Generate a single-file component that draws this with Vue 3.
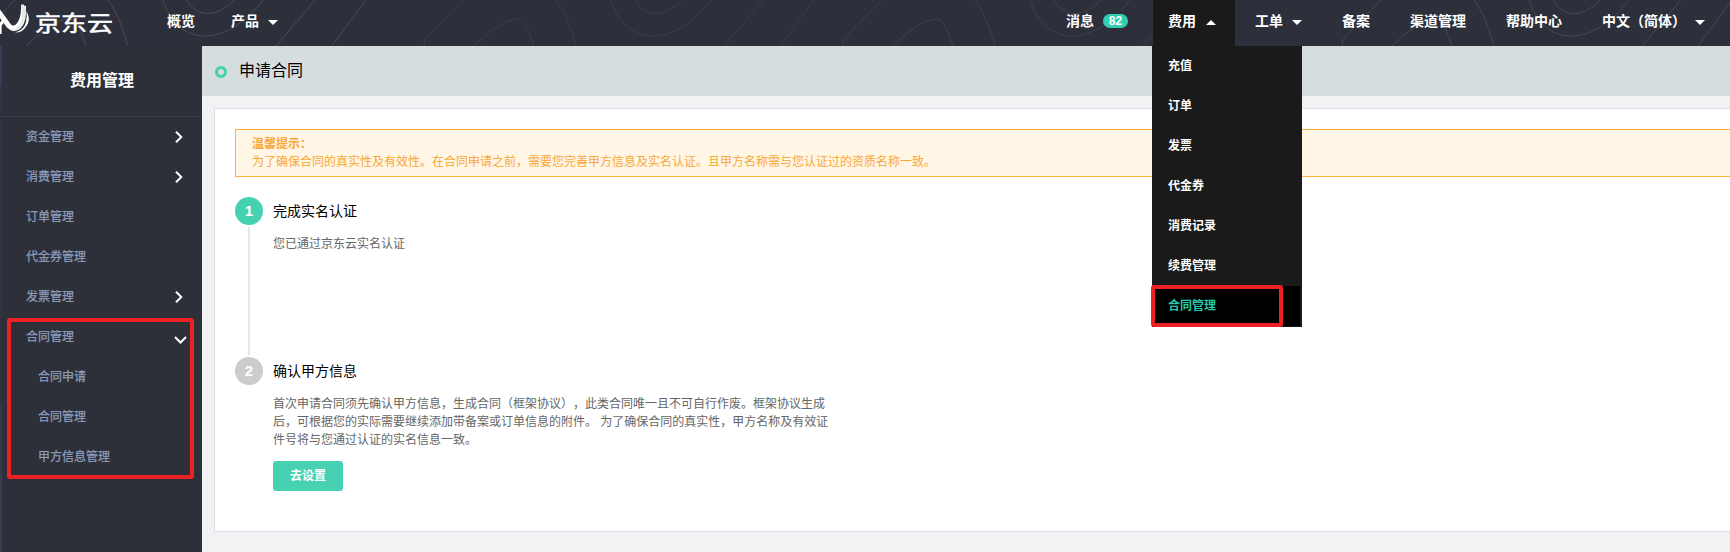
<script setup>
const tiles = [
  { x: 209, o: 0.13 },
  { x: 657, o: 0.07 },
  { x: 1076, o: 0.08 },
  { x: 1575, o: 0.11 },
]
const menu = [
  { label: '资金管理', arrow: 'right' },
  { label: '消费管理', arrow: 'right' },
  { label: '订单管理' },
  { label: '代金券管理' },
  { label: '发票管理', arrow: 'right' },
]
const subMenu = ['合同申请', '合同管理', '甲方信息管理']
const dropdown = ['充值', '订单', '发票', '代金券', '消费记录', '续费管理', '合同管理']
const agreement = [
  '首次申请合同须先确认甲方信息，生成合同（框架协议），此类合同唯一且不可自行作废。框架协议生成',
  '后，可根据您的实际需要继续添加带备案或订单信息的附件。 为了确保合同的真实性，甲方名称及有效证',
  '件号将与您通过认证的实名信息一致。',
]
</script>

<template>
  <div class="page">
    <header class="topbar">
      <svg class="pattern" width="1730" height="46" viewBox="0 0 1730 46">
        <g
          v-for="t in tiles"
          :key="t.x"
          :transform="`translate(${t.x} 0)`"
          fill="none"
          stroke="#fff"
          :stroke-opacity="t.o"
        >
          <path d="M-22 0C-12 18 8 18 25 0" />
          <path d="M-46 0C-32 46 16 50 54 0" />
          <path d="M106 0L67 46" />
          <path d="M157 0L123 46" />
          <path d="M-194 0L-230 37Q-233 40-233 46" />
          <path d="M-101 0Q-90 14-81 46" />
          <path d="M-183 46C-158 22-145 19-140 19C-134 19-130 25-123 46" />
        </g>
      </svg>
      <div class="logo">
        <svg class="mark" width="32" height="38" viewBox="0 0 32 38">
          <path d="M0 34V25L4 20" fill="none" stroke="#fff" stroke-width="3.2" />
          <path d="M-2 11L9 26C15 32 24 24 23.500 6" fill="none" stroke="#fff" stroke-width="5" />
          <path d="M21 5Q23 3 25 6Q28 20 21 28Q15 34 9 29Q20 31 22 16Z" fill="#e9eaec" />
          <path d="M26.500 11Q32 21 25 28Q21 33 15 32.500Q24 30 26 22Q27 17 26.500 11Z" fill="#fff" />
        </svg>
        <span class="brand">京东云</span>
      </div>
      <nav class="nav left">
        <span>概览</span>
        <span class="has-caret">产品<i class="caret"></i></span>
      </nav>
      <nav class="nav right">
        <span class="message">消息<b class="badge">82</b></span>
        <div class="billing">
          <span class="has-caret">费用<i class="caret up"></i></span>
          <ul class="dropdown">
            <li v-for="(d, i) in dropdown" :key="d" :class="{ active: i === 6 }">{{ d }}</li>
          </ul>
          <div class="mark-box menu-mark"></div>
        </div>
        <span class="has-caret work">工单<i class="caret"></i></span>
        <span class="gap-40">备案</span>
        <span class="gap-40">渠道管理</span>
        <span class="gap-40">帮助中心</span>
        <span class="gap-40 has-caret">中文（简体）<i class="caret"></i></span>
      </nav>
    </header>

    <div class="body">
      <aside class="sidebar">
        <i class="strip"></i>
        <h2>费用管理</h2>
        <ul>
          <li v-for="m in menu" :key="m.label">
            {{ m.label }}
            <svg v-if="m.arrow" class="chev" width="8" height="12" viewBox="0 0 8 12">
              <path d="M1 0.700L6.300 6L1 11.300" />
            </svg>
          </li>
          <li>
            合同管理
            <svg class="chev down" width="13" height="8" viewBox="0 0 13 8">
              <path d="M1 1L6.500 6.500L12 1" />
            </svg>
          </li>
          <li v-for="s in subMenu" :key="s" class="sub">{{ s }}</li>
        </ul>
        <div class="mark-box side-mark"></div>
      </aside>

      <main class="main">
        <div class="titlebar"><i class="ring"></i><h1>申请合同</h1></div>
        <section class="card">
          <div class="notice">
            <b>温馨提示：</b>
            <p>为了确保合同的真实性及有效性。在合同申请之前，需要您完善甲方信息及实名认证。且甲方名称需与您认证过的资质名称一致。</p>
          </div>
          <div class="step">
            <div class="rail"><span class="num">1</span><i class="line"></i></div>
            <div class="content">
              <h3>完成实名认证</h3>
              <p>您已通过京东云实名认证</p>
            </div>
          </div>
          <div class="step">
            <div class="rail"><span class="num idle">2</span></div>
            <div class="content">
              <h3>确认甲方信息</h3>
              <p v-for="a in agreement" :key="a">{{ a }}</p>
              <button>去设置</button>
            </div>
          </div>
        </section>
      </main>
    </div>
  </div>
</template>

<style>
body {
  overflow: hidden;
}
</style>

<style scoped>
.page {
  width: 1730px;
  height: 552px;
  overflow: hidden;
  background: #f2f2f4;
  font-family: 'Liberation Sans', 'Noto Sans CJK SC', sans-serif;
  font-size: 12px;
  text-spacing-trim: space-all;
}
ul, h1, h2, h3, p {
  margin: 0;
  padding: 0;
  list-style: none;
  font-weight: 400;
}
.topbar {
  position: relative;
  z-index: 2;
  display: flex;
  height: 46px;
  background: #2d303b;
  color: #fff;
}
.pattern {
  position: absolute;
  inset: 0;
}
.logo {
  position: relative;
  display: flex;
  width: 167px;
}
.mark {
  flex: none;
}
.brand {
  margin-left: 3px;
  height: 46px;
  line-height: 48px;
  font-size: 22px;
  white-space: nowrap;
  transform: scaleX(1.18);
  transform-origin: left;
  -webkit-text-stroke: 0.5px #fff;
}
.nav {
  position: relative;
  display: flex;
  height: 46px;
  line-height: 42px;
  font-size: 14px;
  font-weight: 700;
  white-space: nowrap;
}
.left {
  gap: 36px;
}
.right {
  margin-left: 788px;
}
.has-caret {
  display: flex;
}
.caret {
  width: 0;
  height: 0;
  margin: 20px 0 0 9px;
  border: 5px solid transparent;
  border-top-color: #fff;
  border-bottom: 0;
}
.caret.up {
  border-top: 0;
  border-bottom: 5px solid #fff;
}
.message {
  display: flex;
  width: 87px;
}
.badge {
  width: 25px;
  height: 14px;
  margin: 14px 0 0 9px;
  border-radius: 7px;
  background: #30cfb4;
  font-size: 12px;
  line-height: 14px;
  text-align: center;
}
.billing {
  position: relative;
  box-sizing: border-box;
  width: 82px;
  height: 46px;
  padding-left: 15px;
  background: #1a1a1a;
}
.billing .caret {
  margin-left: 10px;
}
.dropdown {
  position: absolute;
  top: 46px;
  left: -1px;
  width: 148px;
  height: 281px;
  padding-right: 2px;
  background: #1a1a1a;
  font-size: 12px;
}
.dropdown li {
  height: 40px;
  padding-left: 16px;
  line-height: 40px;
  font-weight: 700;
}
.dropdown .active {
  background: #000;
  color: #26c9a9;
}
.mark-box {
  position: absolute;
  box-sizing: border-box;
  border: 4px solid #ed2024;
  border-radius: 3px;
}
.menu-mark {
  top: 285px;
  left: -2px;
  width: 132px;
  height: 42px;
}
.work {
  margin-left: 20px;
}
.gap-40 {
  margin-left: 40px;
}
.body {
  display: flex;
  height: 506px;
}
.sidebar {
  position: relative;
  flex: none;
  width: 202px;
  background: #2d3038;
}
.strip {
  position: absolute;
  top: 0;
  bottom: 0;
  left: 0;
  width: 2px;
  background: linear-gradient(#373c54 40px, #2f3144 40px, #2f3144 360px, #363b50 360px);
}
.sidebar h2 {
  height: 70px;
  margin-left: 2px;
  border-bottom: 1px solid #3d404c;
  color: #fff;
  font-size: 16px;
  font-weight: 700;
  line-height: 69px;
  text-align: center;
}
.sidebar li {
  box-sizing: border-box;
  display: flex;
  align-items: center;
  justify-content: space-between;
  height: 40px;
  padding: 0 19px 3px 26px;
  color: #8f9dbd;
  -webkit-text-stroke: 0.25px #8f9dbd;
}
.sidebar .sub {
  padding-left: 38px;
}
.chev {
  margin-top: 3px;
}
.chev path {
  fill: none;
  stroke: #fff;
  stroke-width: 2;
}
.chev.down {
  margin: 9px -4px 0 0;
}
.side-mark {
  top: 272px;
  left: 7px;
  width: 187px;
  height: 161px;
}
.main {
  flex: none;
  width: 1560px;
}
.titlebar {
  display: flex;
  align-items: center;
  height: 50px;
  padding-left: 13px;
  background: #d5dddf;
}
.ring {
  box-sizing: border-box;
  width: 12px;
  height: 12px;
  margin-top: 2px;
  border: 3px solid #46d0b2;
  border-radius: 50%;
}
.titlebar h1 {
  margin-left: 12px;
  font-size: 16px;
  line-height: 50px;
}
.card {
  box-sizing: border-box;
  height: 424px;
  margin: 12px 0 0 12px;
  padding: 20px 0 0 20px;
  border: 1px solid #d5dfe6;
  background: #fff;
}
.notice {
  box-sizing: border-box;
  height: 48px;
  padding: 5px 16px;
  border: 1px solid #fab03c;
  background: #fff6e6;
  color: #faa737;
  line-height: 18px;
}
.notice b {
  display: block;
}
.step {
  display: flex;
  height: 160px;
}
.notice + .step {
  margin-top: 20px;
}
.rail {
  display: flex;
  flex-direction: column;
  align-items: center;
  width: 28px;
}
.num {
  width: 28px;
  height: 28px;
  border-radius: 50%;
  background: #47d1b3;
  color: #fff;
  font-size: 15px;
  font-weight: 700;
  line-height: 28px;
  text-align: center;
}
.idle {
  background: #ccc;
}
.line {
  width: 2px;
  height: 128px;
  margin-top: 2px;
  background: #e6e6e6;
}
.content {
  margin-left: 10px;
  color: #666;
  line-height: 18px;
  white-space: nowrap;
}
.content h3 {
  margin-bottom: 10px;
  color: #000;
  font-size: 14px;
  line-height: 28px;
}
.content button {
  display: block;
  width: 70px;
  height: 30px;
  margin-top: 12px;
  padding: 0;
  border: 0;
  border-radius: 3px;
  background: #47d1b3;
  color: #fff;
  font: inherit;
  font-weight: 700;
}
</style>
